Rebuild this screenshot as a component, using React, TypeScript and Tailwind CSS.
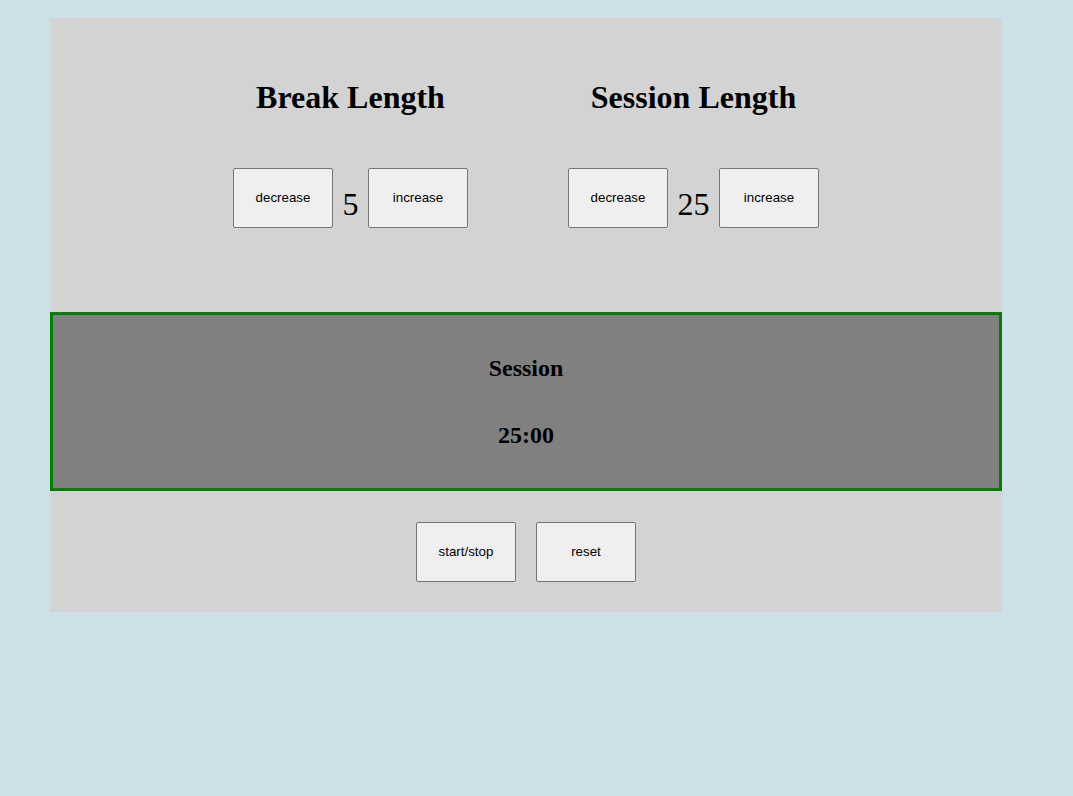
const serif = "font-['Liberation_Serif','Times_New_Roman',serif]";

function Btn({ label }: { label: string }) {
  return (
    <button className="flex h-[60px] w-[100px] items-center justify-center rounded-[2px] border border-[#767676] bg-[#efefef] font-['Liberation_Sans',Arial,sans-serif] text-[13.33px] text-black">
      {label}
    </button>
  );
}

function LengthControl({ title, value }: { title: string; value: number }) {
  return (
    <div className="flex flex-col items-center">
      <h1 className={`${serif} text-[32px] font-bold leading-[37px] text-black`}>{title}</h1>
      <div className="mt-[52px] flex items-center">
        <Btn label="decrease" />
        <span className={`${serif} mx-[9.5px] mt-[12px] text-[32px] leading-[32px] text-black`}>{value}</span>
        <Btn label="increase" />
      </div>
    </div>
  );
}

export default function App() {
  return (
    <div className="min-h-screen w-full bg-[#cde0e7] pl-[50px] pt-[18px]">
      <div className="w-[952px] bg-[#d3d3d3]">
        <div className="flex h-[294px] justify-center gap-[100px] pt-[61px]">
          <LengthControl title="Break Length" value={5} />
          <LengthControl title="Session Length" value={25} />
        </div>
        <div className="flex h-[179px] flex-col items-center border-[3px] border-[#008000] bg-[#808080] pt-[39px]">
          <h2 className={`${serif} text-[24px] font-bold leading-[28px] text-black`}>Session</h2>
          <h2 className={`${serif} mt-[39px] text-[24px] font-bold leading-[28px] text-black`}>25:00</h2>
        </div>
        <div className="flex justify-center gap-[20px] pb-[30px] pt-[31px]">
          <Btn label="start/stop" />
          <Btn label="reset" />
        </div>
      </div>
    </div>
  );
}
